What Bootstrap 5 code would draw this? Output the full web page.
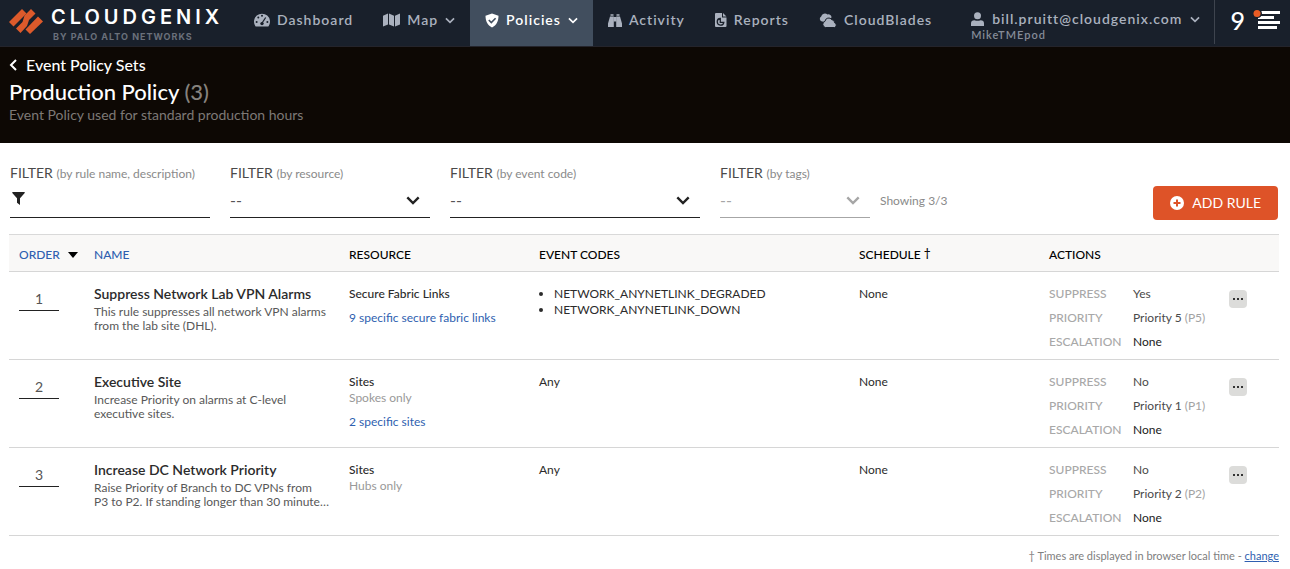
<!DOCTYPE html>
<html lang="en">
<head>
<meta charset="utf-8">
<meta name="viewport" content="width=device-width, initial-scale=1">
<title>Production Policy - CloudGenix</title>
<link href="https://cdn.jsdelivr.net/npm/bootstrap@5.3.0/dist/css/bootstrap.min.css" rel="stylesheet">
<style>
  body { font-family: Lato, "Liberation Sans", sans-serif; font-size: 12px; line-height: 16px; color: #2b2b2b; background: #fff; }
  a { color: #2f5fb0; }
  button, input, select { font-family: inherit; }
  svg { display: block; flex: none; }

  .topbar { background: #19202b; border-bottom: 1px solid #24242b; height: 47px; padding: 0; align-items: stretch; }
  .brand-block { width: 239px; padding-left: 9px; gap: 8px; }
  .brand-name { font-family: "Inter", sans-serif; font-size: 20px; line-height: 26px; font-weight: 600; letter-spacing: 4px; color: #fff; }
  .brand-sub { font-family: "Inter", sans-serif; font-size: 9px; line-height: 14px; font-weight: 700; letter-spacing: 1px; color: #6a707b; padding-left: 2px; }
  .topbar .navbar-nav .nav-link { font-size: 14px; line-height: 18px; font-weight: 600; letter-spacing: 1px; color: #aab1be; padding: 0 15px 6px; gap: 7px; height: 46px; }
  .topbar .navbar-nav .nav-link.active { background: #414e5e; color: #fff; }
  .user-block { color: #aab1be; font-size: 14px; line-height: 16px; font-weight: 600; letter-spacing: 1px; padding: 7px 14px 0; }
  .user-block small { font-size: 11px; line-height: 16px; color: #858c98; }
  .user-toggle { background: none; border: 0; padding: 0; color: inherit; font-weight: inherit; letter-spacing: inherit; margin-top: 4px; }
  .alerts { border: 0; border-left: 1px solid #3e444e; background: none; color: #fff; font-size: 25px; font-weight: 500; line-height: 24px; padding: 0 10px 4px 15px; margin-bottom: 2px; gap: 8px; }

  .page-head { background: #0d0804; padding: 8px 9px 21px; }
  .back-link { color: #fff; font-size: 16px; line-height: 20px; gap: 9px; font-weight: 500; }
  .page-head h1 { color: #fff; font-size: 22px; line-height: 32px; font-weight: 500; margin: 1px 0 0; }
  .page-head h1 span { color: #86827e; }
  .page-head p { color: #7d7976; font-size: 14px; line-height: 14px; margin: 0; }

  .page-main { padding: 21px 11px 0 9px; }
  .filters { gap: 20px; padding-left: 1px; margin-bottom: 14px; }
  .filter-field { padding-bottom: 2px; }
  .filter-label { font-size: 14px; line-height: 18px; color: #4a4a4a; margin: 0; display: block; }
  .filter-label span { font-size: 12px; color: #8a8a8a; }
  .w-a { flex: 0 1 200px; } .w-b { flex: 0 1 250px; } .w-c { flex: 0 1 150px; }
  .line-box { border-bottom: 1px solid #222; height: 35px; color: #222; }
  .line-box.off { border-color: #a6a6a6; color: #a6a6a6; }
  .line-box select, .line-box input { border: 0; background: none; outline: 0; width: 100%; height: 30px; padding: 0; font-size: 16px; color: #555; appearance: none; }
  .line-box.off select { color: #a6a6a6; opacity: 1; }
  .line-box svg { margin-right: 10px; }
  .line-box svg.funnel { margin: 0 4px 4px 2px; }
  .showing { color: #8a8a8a; line-height: 16px; padding-bottom: 11px; margin-left: -10px; }
  .btn-rule { background: #de5328; border: 0; color: #fff; font-size: 14px; line-height: 20px; padding: 7px 17px; border-radius: 4px; gap: 8px; margin-right: 1px; }
  .btn-rule:hover { background: #c8471f; color: #fff; }

  .rules { table-layout: fixed; width: 100%; margin: 0; border-top: 1px solid #d9d9d9; }
  .rules th { background: #f9f8f7; color: #000; font-weight: 500; padding: 12px 10px 8px; height: 37px; line-height: 16px; border-bottom: 1px solid #d6d6d6; }
  .rules th a { text-decoration: none; }
  .rules th sup { font-size: 12px; top: -2px; line-height: 0; }
  .rules td { padding: 14px 10px 0; vertical-align: top; height: 88px; border-bottom: 1px solid #d6d6d6; }
  .order-input { width: 40px; height: 25px; border: 0; border-bottom: 1px solid #222; text-align: center; font-size: 14px; color: #555; padding: 1px 0 0; background: none; }
  .rule-name { font-size: 14px; line-height: 16px; font-weight: 600; margin: 0 0 3px; }
  .rule-desc { line-height: 14px; color: #585858; margin: 0; }
  .res { font-weight: 500; }
  .hint { color: #999; }
  .rules td a { display: inline-block; margin-top: 8px; text-decoration: none; }
  .codes { margin: 0; padding-left: 15px; }
  .acts { display: grid; grid-template-columns: 84px 1fr; row-gap: 8px; margin: 0; white-space: nowrap; }
  .acts dt { font-weight: 500; color: #a8a8a8; }
  .acts dd { margin: 0; color: #4a4a4a; }
  .acts dd:last-child { color: #222; }
  .acts dd span { color: #a3a3a3; }
  .more { width: 18px; height: 18px; border: 0; border-radius: 4px; background: #dcdcda; color: #333; padding: 0; margin-top: 4px; }
  .foot { color: #808080; padding-top: 12px; font-size: 11px; }
</style>
</head>
<body>
<svg width="0" height="0" class="position-absolute" aria-hidden="true">
  <symbol id="chev" viewBox="0 0 16 10"><path d="M1.500 1.500L8 8l6.500-6.500" fill="none" stroke="currentColor" stroke-width="2.700"/></symbol>
  <symbol id="dots" viewBox="0 0 18 18"><path d="M4 8h2v2H4zM8 8h2v2H8zM12 8h2v2h-2z" fill="currentColor"/></symbol>
</svg>

<header class="topbar navbar navbar-expand flex-nowrap">
  <a href="#" class="brand-block d-flex text-decoration-none">
    <svg width="34" height="26" viewBox="0 0 34 26" class="mt-2" fill="#dd5a2b"><g transform="translate(0 1)"><path d="M0 13L13 0l4.500 4.500-13 13z"/><path d="M22 0l4.500 4.500L20 11l-2 6-6.500 7L7 19.500l6.500-6.500 2-6.500z"/><path d="M29 7.500l5 5L21 25l-4.500-4.500z"/></g></svg>
    <span class="d-flex flex-column pt-1">
      <span class="brand-name">CLOUDGENIX</span>
      <span class="brand-sub">BY PALO ALTO NETWORKS</span>
    </span>
  </a>
  <nav class="navbar-nav">
    <a class="nav-link d-flex align-items-center" href="#">
      <svg width="16" height="14" viewBox="0 0 16 14"><path d="M1.300 13A8 8 0 1 1 14.700 13q-.3.500-.9.500H2.200q-.6 0-.9-.5z" fill="currentColor"/><path d="M7.700 10.500L11.700 4.500" stroke="#19202b" stroke-width="1.300"/><g fill="#19202b"><circle cx="8" cy="10.600" r="1.700"/><circle cx="8" cy="2.700" r="1"/><circle cx="4.300" cy="4.600" r="1"/><circle cx="2.600" cy="9" r="1"/><circle cx="13.400" cy="9" r="1"/></g></svg>
      Dashboard</a>
    <a class="nav-link d-flex align-items-center" href="#">
      <svg width="17" height="14" viewBox="0 0 17 14" fill="currentColor"><path d="M0 2.800L5 .6v10.800l-5 2.200zM6 .6l5 2.200v10.800l-5-2.200zM12 2.800L17 .6v10.800l-5 2.200z"/></svg>
      Map <svg width="10" height="7"><use href="#chev"/></svg></a>
    <a class="nav-link active d-flex align-items-center" href="#" aria-current="page">
      <svg width="14" height="15" viewBox="0 0 14 15"><path d="M7 .5l6.500 2.300c0 5.500-2 9.500-6.500 11.700C2.500 12.300.5 8.300.5 2.800z" fill="currentColor"/><path d="M3.800 7l2.500 2.500 4.300-4.300" fill="none" stroke="#414e5e" stroke-width="1.600"/></svg>
      Policies <svg width="10" height="7"><use href="#chev"/></svg></a>
    <a class="nav-link d-flex align-items-center" href="#">
      <svg width="14" height="13" viewBox="0 0 14 13" fill="currentColor"><path d="M2 2.500h3.800V13H0V9.500zM8.200 2.500H12l2 7V13H8.200zM2.500.3h3v1.500h-3zM8.500.3h3v1.500h-3zM5.900 3h2.200v4.500H5.900z"/></svg>
      Activity</a>
    <a class="nav-link d-flex align-items-center" href="#">
      <svg width="12" height="14" viewBox="0 0 12 14"><path d="M1 0h6v4.500h4.500V13q0 1-1 1H1q-1 0-1-1V1q0-1 1-1zM8 0l3.500 3.500H8z" fill="currentColor"/><path d="M5.300 5.500a3.300 3.300 0 1 0 3.500 3.800H5.300z" fill="none" stroke="#19202b" stroke-width="1.300"/></svg>
      Reports</a>
    <a class="nav-link d-flex align-items-center" href="#">
      <svg width="18" height="15" viewBox="0 0 18 15"><path d="M3 8.500a2.700 2.700 0 0 1-.8-5A3.800 3.800 0 0 1 8.500 1.500a3 3 0 0 1 4 3L8 9z" fill="currentColor"/><path d="M6.500 14.500a3.200 3.200 0 0 1-.5-6.200 3.700 3.700 0 0 1 6.800-1.600 2.700 2.700 0 0 1 2.700 3 2.500 2.500 0 0 1 0 4.800z" fill="currentColor" stroke="#19202b" stroke-width="1"/></svg>
      CloudBlades</a>
  </nav>
  <div class="user-block ms-auto d-flex flex-column">
    <button type="button" class="user-toggle d-flex align-items-center gap-2">
      <svg width="13" height="14" viewBox="0 0 13 14" fill="currentColor"><circle cx="6.500" cy="3.800" r="3.500"/><path d="M0 14v-2.500q0-3.300 3.500-3.300 3 1.300 6 0 3.500 0 3.500 3.300V14z"/></svg>
      bill.pruitt@cloudgenix.com
      <svg width="10" height="7"><use href="#chev"/></svg>
    </button>
    <small>MikeTMEpod</small>
  </div>
  <button type="button" class="alerts d-flex align-items-center" aria-label="9 alerts">9
    <svg width="27" height="22" viewBox="0 0 27 22"><path d="M5 2h22v3H5zM5 7h16v3H5zM5 12h22v3H5zM5 17h19v3H5z" fill="#fff"/><circle cx="4.500" cy="4.500" r="4.500" fill="#19202b"/><circle cx="4" cy="4.500" r="3.500" fill="#ea5c24"/></svg>
  </button>
</header>

<section class="page-head">
  <a href="#" class="back-link d-inline-flex align-items-center text-decoration-none">
    <svg width="8" height="12" viewBox="0 0 8 12"><path d="M7 1L2 6l5 5" fill="none" stroke="#fff" stroke-width="2"/></svg>Event Policy Sets</a>
  <h1>Production Policy <span>(3)</span></h1>
  <p>Event Policy used for standard production hours</p>
</section>

<main class="page-main">
  <form class="filters d-flex align-items-end">
    <div class="filter-field w-a">
      <label class="filter-label" for="f1">FILTER <span>(by rule name, description)</span></label>
      <div class="line-box d-flex align-items-center">
        <svg class="funnel" width="13" height="13" viewBox="0 0 13 13"><path d="M.5 0h12q.6.500 0 1.200L8 6.200V13L5 10.800V6.200L.5 1.200Q0 .5.500 0z" fill="currentColor"/></svg>
        <input id="f1" type="text">
      </div>
    </div>
    <div class="filter-field w-a">
      <label class="filter-label" for="f2">FILTER <span>(by resource)</span></label>
      <div class="line-box d-flex align-items-center"><select id="f2"><option>--</option></select><svg width="14" height="9"><use href="#chev"/></svg></div>
    </div>
    <div class="filter-field w-b">
      <label class="filter-label" for="f3">FILTER <span>(by event code)</span></label>
      <div class="line-box d-flex align-items-center"><select id="f3"><option>--</option></select><svg width="14" height="9"><use href="#chev"/></svg></div>
    </div>
    <div class="filter-field w-c">
      <label class="filter-label" for="f4">FILTER <span>(by tags)</span></label>
      <div class="line-box off d-flex align-items-center"><select id="f4" disabled><option>--</option></select><svg width="14" height="9"><use href="#chev"/></svg></div>
    </div>
    <span class="showing">Showing 3/3</span>
    <button type="button" class="btn btn-rule d-flex align-items-center ms-auto">
      <svg width="14" height="14" viewBox="0 0 14 14"><circle cx="7" cy="7" r="7" fill="#fff"/><path d="M7 3.500v7M3.500 7h7" stroke="#de5328" stroke-width="2"/></svg>
      ADD RULE</button>
  </form>

  <table class="rules">
    <colgroup><col style="width:75px"><col style="width:255px"><col style="width:190px"><col><col style="width:190px"><col style="width:180px"><col style="width:60px"></colgroup>
    <thead>
      <tr>
        <th><a href="#" class="d-flex align-items-center gap-2">ORDER <svg width="10" height="6" viewBox="0 0 10 6"><path d="M0 0h10L5 6z" fill="#000"/></svg></a></th>
        <th><a href="#">NAME</a></th><th>RESOURCE</th><th>EVENT CODES</th><th>SCHEDULE <sup>†</sup></th><th>ACTIONS</th><th></th>
      </tr>
    </thead>
    <tbody>
      <tr>
        <td><input class="order-input" type="text" value="1" aria-label="Order"></td>
        <td><h2 class="rule-name">Suppress Network Lab VPN Alarms</h2><p class="rule-desc">This rule suppresses all network VPN alarms from the lab site (DHL).</p></td>
        <td><div class="res">Secure Fabric Links</div><a href="#">9 specific secure fabric links</a></td>
        <td><ul class="codes"><li>NETWORK_ANYNETLINK_DEGRADED</li><li>NETWORK_ANYNETLINK_DOWN</li></ul></td>
        <td>None</td>
        <td><dl class="acts"><dt>SUPPRESS</dt><dd>Yes</dd><dt>PRIORITY</dt><dd>Priority 5 <span>(P5)</span></dd><dt>ESCALATION</dt><dd>None</dd></dl></td>
        <td><button type="button" class="more" aria-label="More"><svg width="18" height="18"><use href="#dots"/></svg></button></td>
      </tr>
      <tr>
        <td><input class="order-input" type="text" value="2" aria-label="Order"></td>
        <td><h2 class="rule-name">Executive Site</h2><p class="rule-desc">Increase Priority on alarms at C-level executive sites.</p></td>
        <td><div class="res">Sites</div><div class="hint">Spokes only</div><a href="#">2 specific sites</a></td>
        <td>Any</td>
        <td>None</td>
        <td><dl class="acts"><dt>SUPPRESS</dt><dd>No</dd><dt>PRIORITY</dt><dd>Priority 1 <span>(P1)</span></dd><dt>ESCALATION</dt><dd>None</dd></dl></td>
        <td><button type="button" class="more" aria-label="More"><svg width="18" height="18"><use href="#dots"/></svg></button></td>
      </tr>
      <tr>
        <td><input class="order-input" type="text" value="3" aria-label="Order"></td>
        <td><h2 class="rule-name">Increase DC Network Priority</h2><p class="rule-desc">Raise Priority of Branch to DC VPNs from P3 to P2. If standing longer than 30 minute…</p></td>
        <td><div class="res">Sites</div><div class="hint">Hubs only</div></td>
        <td>Any</td>
        <td>None</td>
        <td><dl class="acts"><dt>SUPPRESS</dt><dd>No</dd><dt>PRIORITY</dt><dd>Priority 2 <span>(P2)</span></dd><dt>ESCALATION</dt><dd>None</dd></dl></td>
        <td><button type="button" class="more" aria-label="More"><svg width="18" height="18"><use href="#dots"/></svg></button></td>
      </tr>
    </tbody>
  </table>
  <div class="foot text-end">† Times are displayed in browser local time - <a href="#">change</a></div>
</main>
<script src="https://cdn.jsdelivr.net/npm/bootstrap@5.3.0/dist/js/bootstrap.bundle.min.js"></script>
</body>
</html>
